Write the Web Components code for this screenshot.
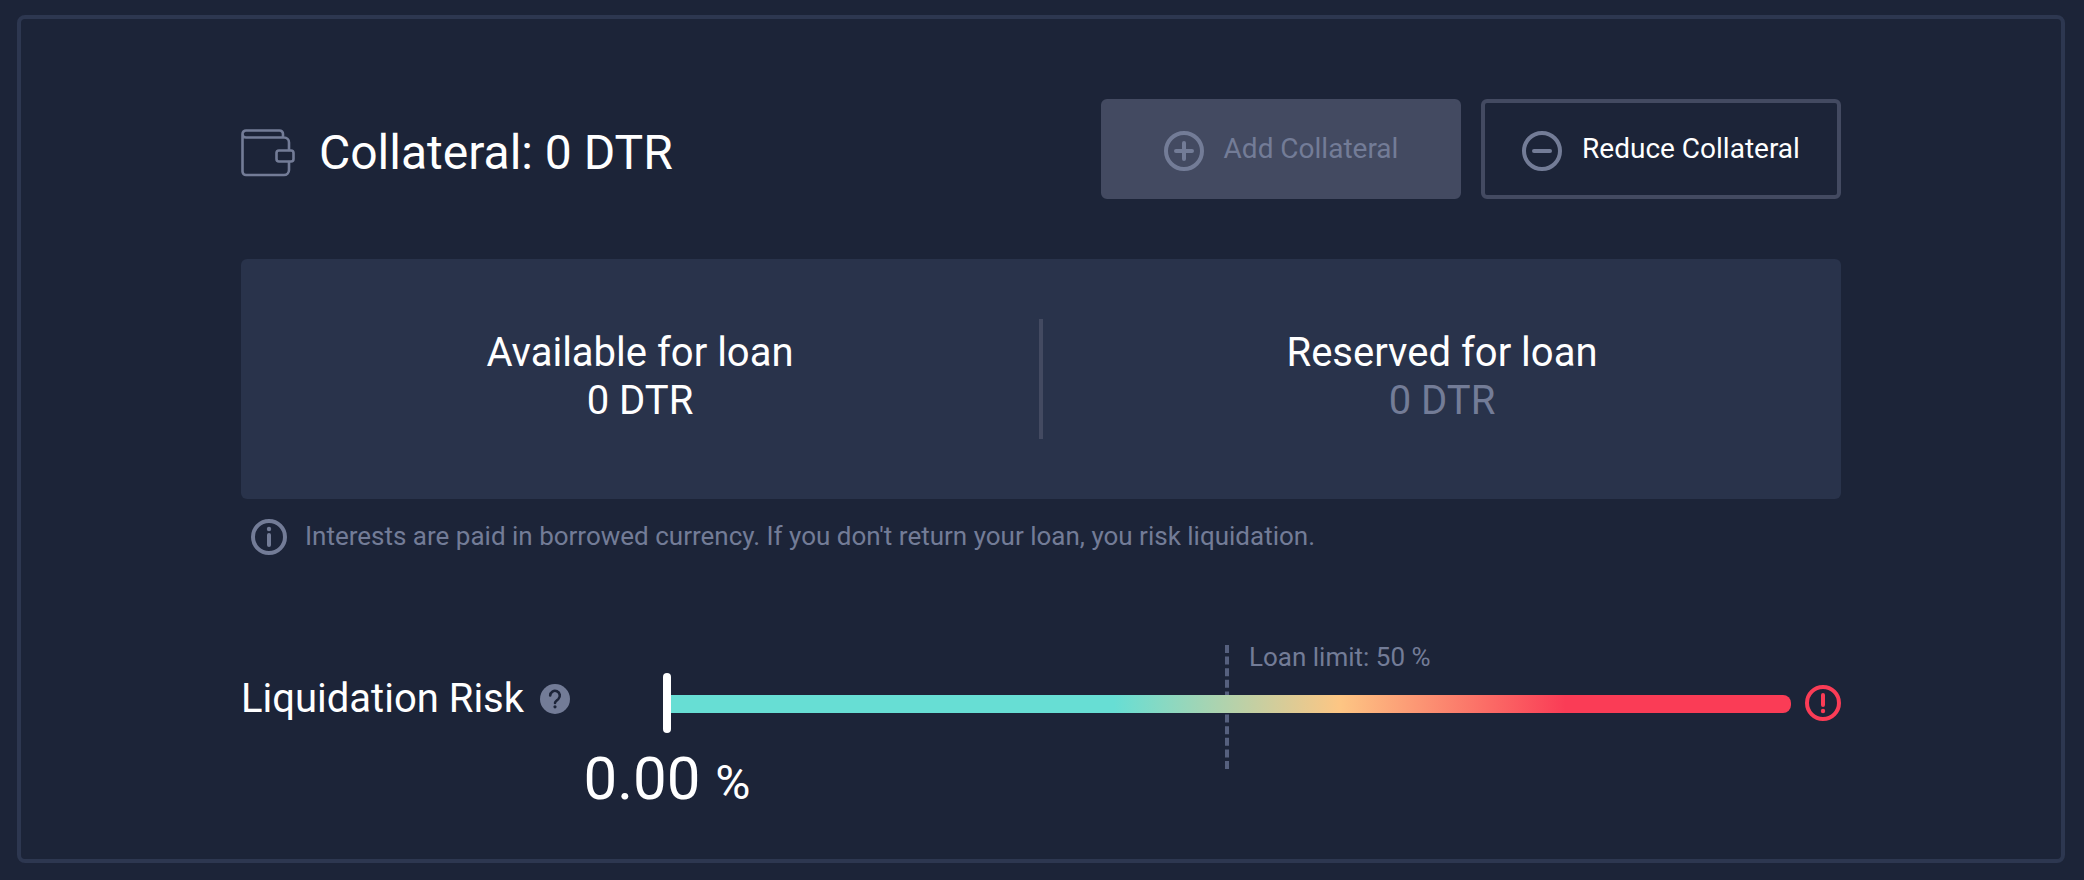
<!DOCTYPE html>
<html lang="en">
<head>
<meta charset="utf-8">
<title>Collateral</title>
<style>
  body { margin: 0; background: #1c2438; color: #fff; font-family: Roboto, sans-serif; }
</style>
</head>
<body>
<collateral-panel></collateral-panel>

<template id="t-icon">
  <style>
    :host { display: block; flex: none; color: #737c97; }
    svg { display: block; }
    :host([name="alert"]) { color: #fa3c56; }
  </style>
</template>

<template id="t-button">
  <style>
    :host { display: block; width: 360px; }
    button { box-sizing: border-box; width: 100%; height: 100px; padding: 0; display: flex; align-items: center; justify-content: center; gap: 20px; border: 4px solid #434a61; border-radius: 6px; background: transparent; color: #fff; font: 28px/32px Roboto, sans-serif; }
    button:disabled { background: #434a61; color: #737c97; }
    ui-icon { margin-top: 4px; }
  </style>
  <button type="button"><ui-icon></ui-icon><span><slot></slot></span></button>
</template>

<template id="t-stat">
  <style>
    :host { display: block; flex: 1; padding-bottom: 4px; text-align: center; font-size: 40px; line-height: 48px; }
    h2, p { margin: 0; font: inherit; }
    :host([muted]) p { color: #737c97; }
  </style>
  <h2><slot name="label"></slot></h2>
  <p><slot></slot></p>
</template>

<template id="t-gauge">
  <style>
    :host { display: block; position: relative; flex: 1; min-width: 0; }
    .limit { height: 28px; padding-left: calc(50% + 22px); font-size: 26px; line-height: 24px; color: #737c97; white-space: nowrap; }
    .mark { position: absolute; left: calc(50% - 2px); top: 0; height: 124px; border-left: 4px dashed #56607e; }
    input { position: relative; display: block; width: 100%; height: 62px; margin: 0; appearance: none; background: none; }
    input::-webkit-slider-runnable-track { height: 18px; border-radius: 8px; background: linear-gradient(90deg, #67ded4 40%, #fdc684 60%, #fa3c56 80%); }
    input::-webkit-slider-thumb { appearance: none; width: 8px; height: 60px; margin-top: -22px; border-radius: 4px; background: #fff; }
    output { display: block; width: 168px; margin: 8px 0 0 -80px; text-align: center; font-size: 60px; line-height: 72px; white-space: nowrap; }
    small { font-size: 48px; line-height: 48px; }
  </style>
  <div class="mark"></div>
  <div class="limit"><slot></slot></div>
  <input id="risk" type="range" min="0" max="100" step="0.01" value="0" aria-label="Liquidation Risk">
  <output for="risk"><span id="value">0.00</span> <small>%</small></output>
</template>

<template id="t-panel">
  <style>
    :host { display: block; padding: 15px 19px 17px 17px; }
    section { border: 4px solid #2d3750; border-radius: 8px; padding: 80px 220px 44px; }
    header { display: flex; align-items: center; gap: 20px; }
    h1 { margin: 0; padding-top: 8px; flex: 1; display: flex; align-items: center; gap: 24px; font-size: 48px; line-height: 56px; font-weight: 400; white-space: nowrap; }
    .stats { display: flex; align-items: center; margin-top: 60px; padding: 60px 0; border-radius: 6px; background: #29334b; }
    hr { width: 4px; height: 120px; margin: 0; border: 0; background: #434a61; }
    .note { display: flex; align-items: center; gap: 18px; margin: 20px 0 0; padding-left: 10px; font-size: 26px; line-height: 32px; color: #737c97; }
    .note span { padding-bottom: 2px; }
    .risk { display: flex; align-items: flex-start; margin-top: 90px; }
    .name { display: flex; align-items: center; gap: 16px; width: 422px; margin-top: 30px; font-size: 40px; line-height: 48px; }
    .alert { margin: 40px 0 0 14px; }
  </style>
  <section>
    <header>
      <h1><ui-icon name="wallet"></ui-icon><span>Collateral: 0 DTR</span></h1>
      <action-button icon="plus" disabled>Add Collateral</action-button>
      <action-button icon="minus">Reduce Collateral</action-button>
    </header>
    <div class="stats">
      <loan-stat><span slot="label">Available for loan</span>0 DTR</loan-stat>
      <hr>
      <loan-stat muted><span slot="label">Reserved for loan</span>0 DTR</loan-stat>
    </div>
    <p class="note"><ui-icon name="info"></ui-icon><span>Interests are paid in borrowed currency. If you don't return your loan, you risk liquidation.</span></p>
    <div class="risk">
      <div class="name"><span>Liquidation Risk</span><ui-icon name="help"></ui-icon></div>
      <risk-gauge>Loan limit: 50 %</risk-gauge>
      <ui-icon class="alert" name="alert"></ui-icon>
    </div>
  </section>
</template>

<script>
const stroke = 'fill="none" stroke="currentColor" stroke-linecap="round" stroke-linejoin="round"';
const icons = {
  wallet: [54, 48, `<g ${stroke} stroke-width="2.6"><path d="M5 8.500H43a5 5 0 0 1 5 5V21M48 33V41a5 5 0 0 1-5 5H5a3.500 3.500 0 0 1-3.500-3.500V5A3.500 3.500 0 0 1 5 1.500H38.500A3.500 3.500 0 0 1 42 5V8M1.500 5A3.500 3.500 0 0 0 5 8.500"/><rect x="35.500" y="21.500" width="17" height="11" rx="2.500"/></g>`],
  plus: [40, 40, `<g ${stroke} stroke-width="4"><circle cx="20" cy="20" r="18"/><path d="M12 20h16M20 12v16"/></g>`],
  minus: [40, 40, `<g ${stroke} stroke-width="4"><circle cx="20" cy="20" r="18"/><path d="M12 20h16"/></g>`],
  info: [36, 36, `<circle cx="18" cy="18" r="16" ${stroke} stroke-width="4"/><path d="M18 16v10" ${stroke} stroke-width="4"/><circle cx="18" cy="10" r="2.200" fill="currentColor"/>`],
  alert: [36, 36, `<circle cx="18" cy="18" r="16" ${stroke} stroke-width="4"/><path d="M18 10v10" ${stroke} stroke-width="4"/><circle cx="18" cy="26" r="2.200" fill="currentColor"/>`],
  help: [30, 30, `<circle cx="15" cy="15" r="15" fill="currentColor"/><path d="M10.200 11.500a4.800 4.800 0 1 1 8.100 3.600C16.500 16.700 15 17.300 15 19" fill="none" stroke="#1c2438" stroke-width="2.600" stroke-linecap="round"/><circle cx="15" cy="22.800" r="1.600" fill="#1c2438"/>`]
};

class Base extends HTMLElement {
  constructor(id) {
    super();
    this.attachShadow({ mode: 'open' }).append(document.getElementById(id).content.cloneNode(true));
  }
}
customElements.define('ui-icon', class extends Base {
  static observedAttributes = ['name'];
  constructor() { super('t-icon'); }
  attributeChangedCallback() {
    const [w, h, body] = icons[this.getAttribute('name')];
    this.shadowRoot.querySelector('svg')?.remove();
    this.shadowRoot.lastElementChild.insertAdjacentHTML('afterend', `<svg width="${w}" height="${h}" viewBox="0 0 ${w} ${h}" aria-hidden="true">${body}</svg>`);
  }
});
customElements.define('action-button', class extends Base {
  constructor() { super('t-button'); }
  connectedCallback() {
    this.shadowRoot.querySelector('button').disabled = this.hasAttribute('disabled');
    this.shadowRoot.querySelector('ui-icon').setAttribute('name', this.getAttribute('icon'));
  }
});
customElements.define('loan-stat', class extends Base {
  constructor() { super('t-stat'); }
});
customElements.define('risk-gauge', class extends Base {
  constructor() {
    super('t-gauge');
    const input = this.shadowRoot.querySelector('input');
    input.addEventListener('input', () => {
      this.shadowRoot.getElementById('value').textContent = Number(input.value).toFixed(2);
    });
  }
});
customElements.define('collateral-panel', class extends Base {
  constructor() { super('t-panel'); }
});
</script>
</body>
</html>
